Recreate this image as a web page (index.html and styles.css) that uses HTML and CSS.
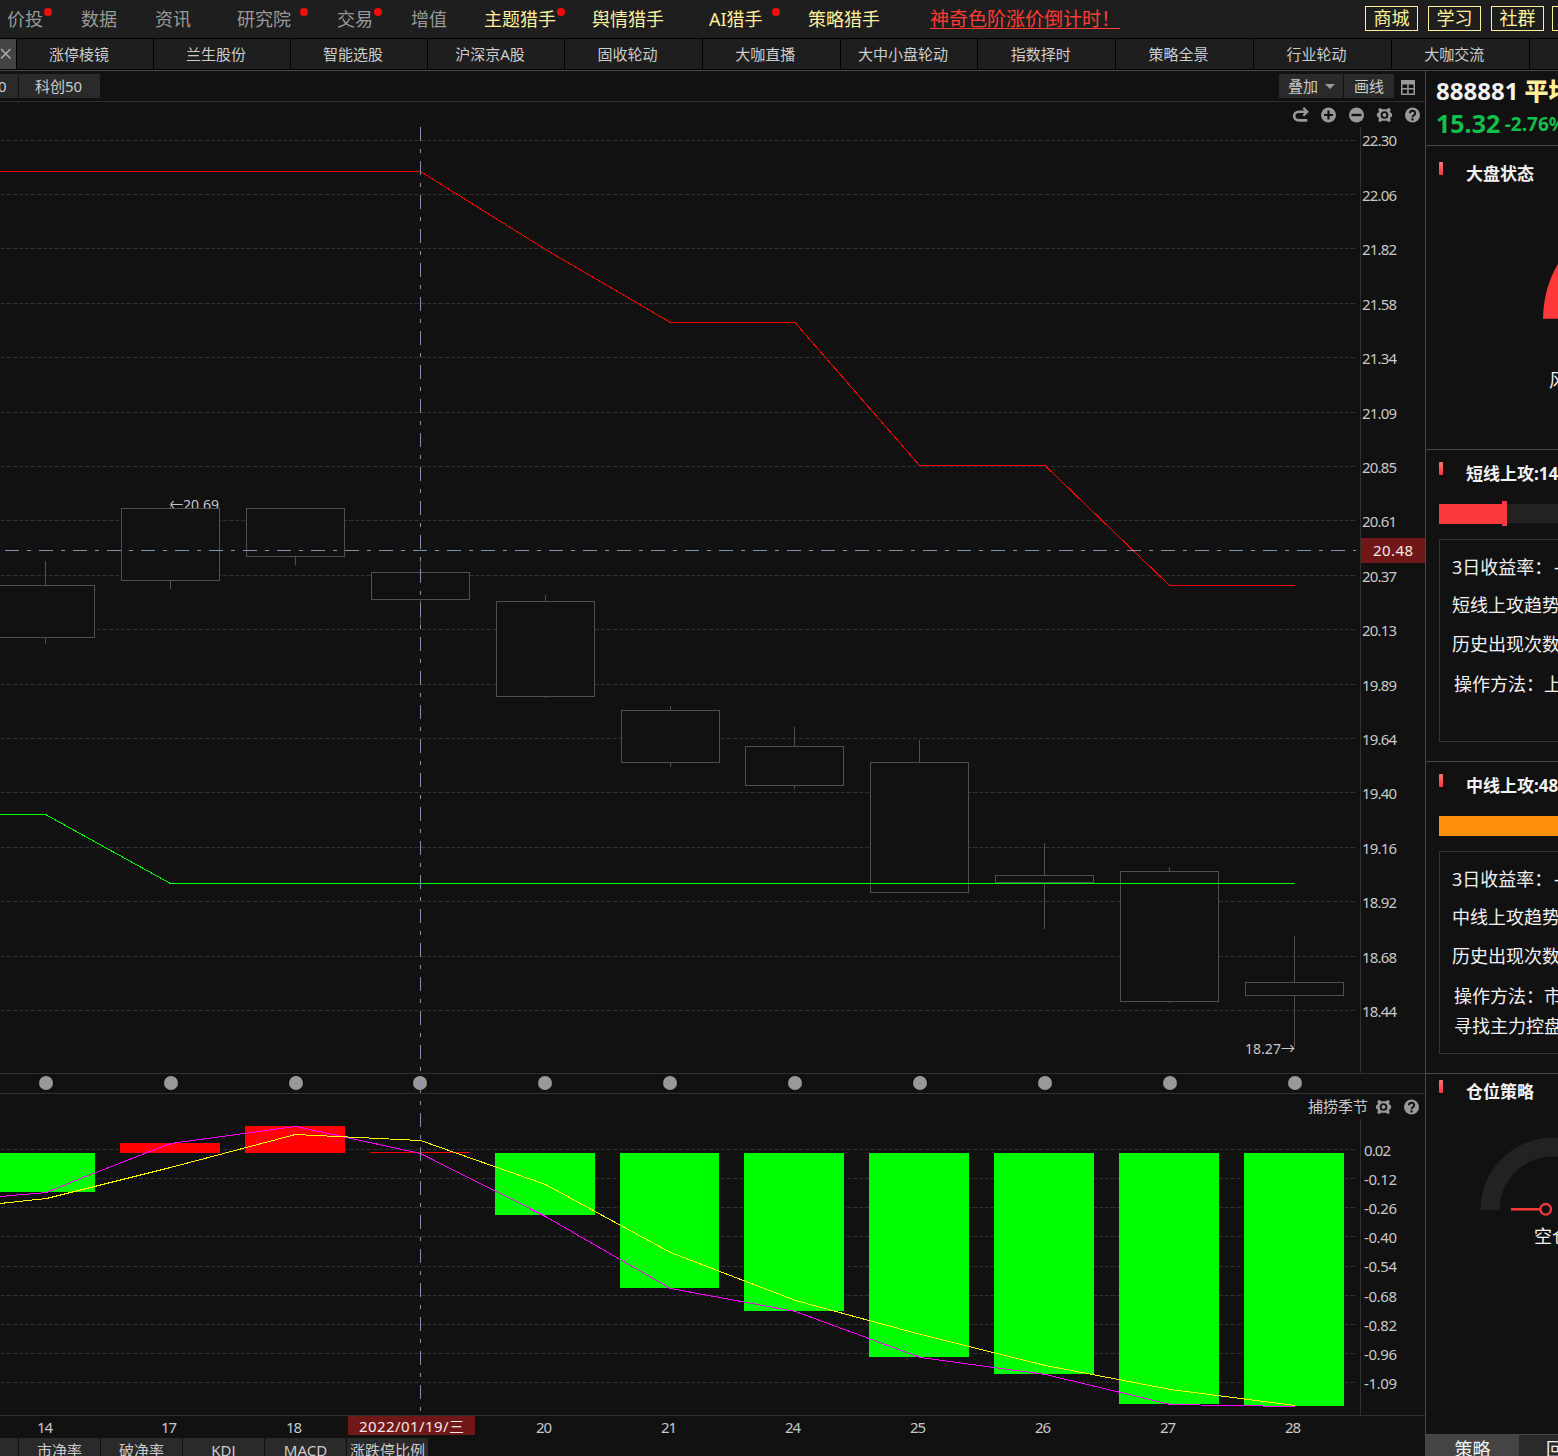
FILE: index.html
```html
<!DOCTYPE html>
<html lang="zh-CN">
<head>
<meta charset="utf-8">
<title>行情</title>
<link rel="stylesheet" href="styles.css">
</head>
<body>
<div class="app">
  <header class="nav">
    <nav class="menu">
      <a class="dot">价投</a><a>数据</a><a>资讯</a><a class="dot far">研究院</a><a class="dot">交易</a><a>增值</a>
      <a class="hunter dot">主题猎手</a><a class="hunter">舆情猎手</a><a class="hunter dot far">AI猎手</a><a class="hunter">策略猎手</a>
      <a class="promo">神奇色阶涨价倒计时！</a>
    </nav>
    <div class="links"><a>商城</a><a>学习</a><a>社群</a><a></a></div>
  </header>
  <nav class="tabs">
    <span class="close"><svg width="12" height="12" viewBox="0 0 12 12"><path d="M1 1L10.5 10.5M10.5 1L1 10.5" stroke="#aaa" stroke-width="1.6"/></svg></span>
    <a>涨停棱镜</a><a>兰生股份</a><a>智能选股</a><a>沪深京A股</a><a>固收轮动</a><a>大咖直播</a><a>大中小盘轮动</a><a>指数择时</a><a>策略全景</a><a>行业轮动</a><a>大咖交流</a><a></a>
  </nav>
  <div class="body">
    <main class="main">
      <div class="toolbar">
        <span class="chip cut">0</span><span class="chip index">科创50</span>
        <span class="spring"></span>
        <span class="chip overlay">叠加<i class="caret"></i></span><span class="chip draw">画线</span>
        <svg class="grid-icon" width="14" height="15" viewBox="0 0 14 15"><path d="M0 0H14V15H0ZM1.5 4.5V8H6.2V4.5ZM7.7 4.5V8H12.5V4.5ZM1.5 9.5V13.5H6.2V9.5ZM7.7 9.5V13.5H12.5V9.5Z" fill="#999" fill-rule="evenodd"/></svg>
      </div>
      <svg class="chart" width="1425" height="1336" viewBox="0 102 1425 1336">
        <defs>
          <g id="gear"><path d="M-4.6-7.3L-2.4-5.7H2.4L4.6-7.3L6.2-5.6L5.4-3L7.6-1.3V1.3L5.4 3L6.2 5.6L4.6 7.3L2.4 5.7H-2.4L-4.6 7.3L-6.2 5.6L-5.4 3L-7.6 1.3V-1.3L-5.4-3L-6.2-5.6Z" fill="#999"/><circle r="2.9" fill="none" stroke="#111" stroke-width="1.9"/></g>
          <g id="help"><circle r="7.5" fill="#999"/><path d="M-2.6-1.7C-2.6-5.2 2.7-5.2 2.7-1.8C2.7.2 0 .2 0 2.2" fill="none" stroke="#111" stroke-width="2"/><rect x="-1.1" y="3.3" width="2.2" height="2.2" fill="#111"/></g>
          <circle id="day" r="7" fill="#999"/>
        </defs>

        <!-- grid and frame -->
        <path class="grid" d="M1 140.5H1355M1 194.5H1355M1 248.5H1355M1 303.5H1355M1 357.5H1355M1 412.5H1355M1 466.5H1355M1 520.5H1355M1 575.5H1355M1 629.5H1355M1 684.5H1355M1 738.5H1355M1 792.5H1355M1 847.5H1355M1 901.5H1355M1 956.5H1355M1 1010.5H1355"/>
        <path class="grid" d="M1 1149.5H1355M1 1178.5H1355M1 1207.5H1355M1 1236.5H1355M1 1266.5H1355M1 1295.5H1355M1 1324.5H1355M1 1353.5H1355M1 1382.5H1355"/>
        <path class="frame" d="M1360.5 127V1073M1360.5 1119V1415M0 1073.5H1425M0 1093.5H1425M0 1415.5H1425"/>

        <!-- chart tools -->
        <g transform="translate(1300.5 115)" fill="none" stroke="#999"><path d="M6.8 5.4H-1.5C-8 5.4-8-3.2-1.5-3.2H5.5" stroke-width="2.6"/><path d="M2.8-7.2L6.8-3.2L2.8.8" stroke-width="2.2"/></g>
        <g transform="translate(1328.5 115)"><circle r="7.5" fill="#999"/><path d="M-4.5 0H4.5M0-4.5V4.5" stroke="#111" stroke-width="2.2"/></g>
        <g transform="translate(1356.5 115)"><circle r="7.5" fill="#999"/><path d="M-5 0H5" stroke="#111" stroke-width="2.4"/></g>
        <use href="#gear" x="1384.5" y="115"/><use href="#help" x="1412.5" y="115"/>
        <use href="#gear" x="1383.5" y="1107"/><use href="#help" x="1411.5" y="1107"/>
        <text class="label" x="1308" y="1112">捕捞季节</text>

        <!-- candles -->
        <text class="label" x="169" y="510" textLength="50" lengthAdjust="spacingAndGlyphs">←20.69</text>
        <g class="candle">
          <path d="M45.5 561V644M170.5 504V589M295.5 508V565M420.5 560V626M545.5 595V698M670.5 706V767M794.5 727V789M919.5 740V892M1044.5 843V929M1169.5 867V1003M1294.5 936V1047"/>
          <rect x="-4.5" y="585.5" width="99" height="52"/>
          <rect x="121.5" y="508.5" width="98" height="72"/>
          <rect x="246.5" y="508.5" width="98" height="48"/>
          <rect x="371.5" y="572.5" width="98" height="27"/>
          <rect x="496.5" y="601.5" width="98" height="95"/>
          <rect x="621.5" y="710.5" width="98" height="52"/>
          <rect x="745.5" y="746.5" width="98" height="39"/>
          <rect x="870.5" y="762.5" width="98" height="130"/>
          <rect x="995.5" y="875.5" width="98" height="7"/>
          <rect x="1120.5" y="871.5" width="98" height="130"/>
          <rect x="1245.5" y="982.5" width="98" height="13"/>
        </g>
        <text class="label" x="1245" y="1054" textLength="50" lengthAdjust="spacingAndGlyphs">18.27→</text>
        <polyline class="line" stroke="#f00" points="0,171.5 420.5,171.5 545.5,249.5 670.5,322.5 795,322.5 919.5,465.5 1045,465.5 1169.5,585.5 1295,585.5"/>
        <polyline class="line" stroke="#0f0" points="0,814.5 45.5,814.5 170.5,883.5 1295,883.5"/>

        <!-- trading days -->
        <use href="#day" x="46" y="1083"/><use href="#day" x="171" y="1083"/><use href="#day" x="296" y="1083"/><use href="#day" x="420" y="1083"/><use href="#day" x="545" y="1083"/><use href="#day" x="670" y="1083"/><use href="#day" x="795" y="1083"/><use href="#day" x="920" y="1083"/><use href="#day" x="1045" y="1083"/><use href="#day" x="1170" y="1083"/><use href="#day" x="1295" y="1083"/>

        <!-- indicator -->
        <path fill="#f00" d="M120 1143H220V1153H120ZM245 1126H345V1153H245ZM370 1152H470V1153H370Z"/>
        <path fill="#0f0" d="M0 1153H95V1192H0ZM495 1153H595V1215H495ZM620 1153H719V1288H620ZM744 1153H844V1311H744ZM869 1153H969V1357H869ZM994 1153H1094V1374H994ZM1119 1153H1219V1404H1119ZM1244 1153H1344V1406H1244Z"/>
        <polyline class="line" stroke="#f0f" points="0,1196.5 46.5,1192.5 80.5,1178.5 170.5,1143.5 295.5,1126.5 420.5,1153.5 545.5,1216.5 670.5,1288.5 795.5,1311.5 920.5,1357.5 1045.5,1374.5 1170.5,1404.5 1230,1405.5 1295,1406.5"/>
        <polyline class="line" stroke="#ff0" points="0,1203.5 46.5,1198.5 170.5,1167.5 295.5,1134.5 420.5,1140.5 545.5,1184.5 670.5,1252.5 795.5,1300.5 920.5,1334.5 1045.5,1365.5 1170.5,1389.5 1295,1405.5"/>

        <!-- crosshair -->
        <path class="cross" d="M5 550.5H1356M420.5 127V1411"/>

        <!-- price scale -->
        <g class="scale">
          <text x="1362" y="146" textLength="35">22.30</text><text x="1362" y="201" textLength="35">22.06</text><text x="1362" y="255" textLength="35">21.82</text><text x="1362" y="310" textLength="35">21.58</text><text x="1362" y="364" textLength="35">21.34</text><text x="1362" y="419" textLength="35">21.09</text><text x="1362" y="473" textLength="35">20.85</text><text x="1362" y="527" textLength="35">20.61</text><text x="1362" y="582" textLength="35">20.37</text><text x="1362" y="636" textLength="35">20.13</text><text x="1362" y="691" textLength="35">19.89</text><text x="1362" y="745" textLength="35">19.64</text><text x="1362" y="799" textLength="35">19.40</text><text x="1362" y="854" textLength="35">19.16</text><text x="1362" y="908" textLength="35">18.92</text><text x="1362" y="963" textLength="35">18.68</text><text x="1362" y="1017" textLength="35">18.44</text>
        </g>
        <g class="scale">
          <text x="1364" y="1156" textLength="27">0.02</text><text x="1364" y="1185" textLength="33">-0.12</text><text x="1364" y="1214" textLength="33">-0.26</text><text x="1364" y="1243" textLength="33">-0.40</text><text x="1364" y="1272" textLength="33">-0.54</text><text x="1364" y="1302" textLength="33">-0.68</text><text x="1364" y="1331" textLength="33">-0.82</text><text x="1364" y="1360" textLength="33">-0.96</text><text x="1364" y="1389" textLength="33">-1.09</text>
        </g>
        <rect x="1361" y="538" width="64" height="25" fill="#701818"/>
        <text class="mark" x="1373" y="556" textLength="40">20.48</text>

        <!-- dates -->
        <g class="scale">
          <text x="37" y="1433" textLength="16">14</text><text x="161" y="1433" textLength="16">17</text><text x="286" y="1433" textLength="16">18</text><text x="536" y="1433" textLength="16">20</text><text x="661" y="1433" textLength="16">21</text><text x="785" y="1433" textLength="16">24</text><text x="910" y="1433" textLength="16">25</text><text x="1035" y="1433" textLength="16">26</text><text x="1160" y="1433" textLength="16">27</text><text x="1285" y="1433" textLength="16">28</text>
        </g>
        <rect x="348" y="1416" width="127" height="19" fill="#701818"/>
        <text class="mark" x="359" y="1432" textLength="105">2022/01/19/三</text>
      </svg>
      <div class="indicators"><span class="cut"></span><span>市净率</span><span>破净率</span><span>KDJ</span><span>MACD</span><span>涨跌停比例</span></div>
    </main>

    <aside class="side">
      <div class="quote">
        <div class="name">888881 <b>平均</b></div>
        <div class="price">15.32 <small>-2.76%</small></div>
      </div>
      <section class="card state">
        <h3>大盘状态</h3>
        <svg class="gauge" width="132" height="70" viewBox="1426 250 132 70"><path d="M1543 318.7A108 108 0 0 1 1759 318.7H1719A68 68 0 0 0 1583 318.7Z" fill="#ff3939"/></svg>
        <p class="risk">风</p>
      </section>
      <section class="card">
        <h3>短线上攻:14</h3>
        <div class="meter"><i class="fill short"></i></div>
        <div class="box"><p>3日收益率： -</p><p>短线上攻趋势</p><p>历史出现次数</p><p class="tip">操作方法：上</p></div>
      </section>
      <section class="card">
        <h3>中线上攻:48</h3>
        <div class="meter"><i class="fill mid"></i></div>
        <div class="box"><p>3日收益率： -</p><p>中线上攻趋势</p><p>历史出现次数</p><p class="tip">操作方法：市<br>寻找主力控盘</p></div>
      </section>
      <section class="card position">
        <h3>仓位策略</h3>
        <svg class="gauge" width="132" height="90" viewBox="1426 1130 132 90"><path d="M1480.5 1210A72.5 72.5 0 0 1 1625.5 1210H1606.5A53.5 53.5 0 0 0 1499.5 1210Z" fill="#222"/><path d="M1511 1209.3H1541" stroke="#f03838" stroke-width="2.6"/><circle cx="1545.7" cy="1209.3" r="5.3" fill="#111" stroke="#f03838" stroke-width="2.3"/></svg>
        <p class="empty">空仓</p>
      </section>
      <div class="side-tabs"><span class="on">策略</span><span>回</span></div>
    </aside>
  </div>
</div>
</body>
</html>
```

FILE: styles.css
```css
* { box-sizing: border-box; }
body { margin: 0; background: #111; overflow: hidden; color: #ccc; font-family: "Noto Sans", "Noto Sans CJK SC", sans-serif; font-size: 15px; }
h3, p { margin: 0; font-weight: 400; }
.app { width: 1558px; height: 1456px; overflow: hidden; display: flex; flex-direction: column; white-space: nowrap; }

.nav { height: 39px; background: #1e1e1e; border-bottom: 1px solid #000; display: flex; flex: none; justify-content: space-between; overflow: hidden; }
.menu { display: grid; grid-template-columns: 74px 74px 82px 100px 74px 73px 108px 117px 99px 122px 200px; padding-left: 7px; line-height: 39px; font-size: 18px; color: #999; }
.menu a { position: relative; justify-self: start; height: 38px; }
.menu .hunter { color: #fff09a; }
.menu .dot::after { content: ""; position: absolute; right: -9px; top: 8px; width: 8px; height: 8px; border-radius: 50%; background: #f00d0d; }
.menu .far::after { right: -17px; }
.menu .promo { font-size: 19px; color: #ff3c33; text-decoration: underline; text-underline-offset: 2px; text-decoration-thickness: 1px; }
.links { display: flex; gap: 10px; width: 193px; flex: none; padding-top: 6px; overflow: hidden; }
.links a { flex: none; width: 53px; height: 25px; border: 1px solid #fff09a; color: #fff09a; font-size: 18px; line-height: 23px; text-align: center; }
.links a:last-child { margin-left: -2px; }

.tabs { height: 32px; flex: none; display: flex; background: #1e1e1e; border-bottom: 1px solid #484848; box-shadow: inset 0 -1px #000; }
.tabs a { width: 137.8px; flex: none; border-left: 1px solid #000; padding-right: 12px; line-height: 31px; text-align: center; }
.tabs a:nth-child(-n+5) { width: 137px; }
.close { width: 16px; flex: none; background: #444; height: 30px; padding-top: 9px; line-height: 0; }

.body { display: flex; flex: 1; min-height: 0; }
.main { width: 1425px; flex: none; display: flex; flex-direction: column; }
.toolbar { height: 31px; flex: none; border-bottom: 1px solid #2e2e2e; display: flex; align-items: flex-start; padding-top: 3px; gap: 1px; }
.chip { height: 24px; background: #2a2a2a; line-height: 24px; width: 81px; text-align: center; }
.toolbar .cut { width: 18px; text-align: left; text-indent: -2px; }
.toolbar .index { padding-right: 2px; }
.spring { flex: 1; }
.toolbar .overlay { width: 64px; display: flex; align-items: center; gap: 7px; padding-left: 9px; line-height: 22px; }
.caret { border: 5px solid transparent; border-top-color: #999; border-bottom: 0; }
.toolbar .draw { width: 50px; }
.grid-icon { margin: 6px 10px 0 6px; }
.chart { display: block; flex: none; }
.chart text { font-size: 15px; fill: #c8c8c8; }
.chart .mark { fill: #f4e8e8; }
.grid, .frame, .candle, .line, .cross { fill: none; shape-rendering: crispEdges; }
.grid { stroke: #303030; stroke-dasharray: 4 2; }
.frame { stroke: #303030; }
.candle { stroke: #505050; }
.candle rect { fill: #111; }
.cross { stroke: #8094ad; stroke-dasharray: 14 8 4 8; }
.indicators { display: flex; gap: 1px; height: 18px; overflow: hidden; }
.indicators span { width: 81px; background: #2a2a2a; text-align: center; line-height: 24px; flex: none; }
.indicators .cut { width: 18px; }

.side { width: 133px; flex: none; border-left: 1px solid #484848; color: #f2f2f2; overflow: hidden; display: flex; flex-direction: column; }
.quote { height: 75px; flex: none; border-bottom: 1px solid #484848; padding: 4px 0 0 10px; font-weight: 700; }
.name { font-size: 24px; line-height: 32px; }
.name b { color: #ffef96; }
.price { font-size: 25px; line-height: 33px; color: #12bf4b; }
.price small { font-size: 19px; margin-left: -2px; vertical-align: 2px; }
.card { height: 312px; flex: none; border-bottom: 1px solid #484848; padding: 12px 0 0 13px; overflow: hidden; }
.card h3 { position: relative; font-size: 17px; font-weight: 700; line-height: 23px; height: 42px; padding-left: 27px; }
.card h3::before { content: ""; position: absolute; left: 0; top: 0; width: 4px; height: 13px; border-radius: 1px; background: linear-gradient(#ff7474, #ff3636); }
.state { height: 304px; padding-top: 16px; }
.gauge { display: block; margin: 46px 0 0 -13px; }
.risk { font-size: 18px; line-height: 24px; padding: 48px 0 0 110px; }
.meter { height: 19px; background: #222; margin-bottom: 16px; }
.fill { display: block; height: 20px; }
.fill.short { width: 68px; background: #fb3b3b; position: relative; }
.fill.short::after { content: ""; position: absolute; right: 0; top: -3px; width: 5px; height: 25px; background: inherit; }
.fill.mid { background: #ff8f0b; }
.box { width: 260px; height: 203px; border: 1px solid #333; padding: 8px 0 0 12px; font-size: 18px; line-height: 38.3px; }
.box p:first-child { word-spacing: -3px; }
.box .tip { padding: 6px 0 0 2px; line-height: 30px; }
.position { height: 361px; padding-top: 6px; }
.position .gauge { margin-top: 8px; }
.empty { font-size: 18px; line-height: 24px; padding: 4px 0 0 95px; }
.side-tabs { display: flex; flex: 1; background: #2a2a2a; font-size: 18px; line-height: 29px; overflow: hidden; }
.side-tabs span { width: 93px; flex: none; text-align: center; }
.side-tabs .on { background: #444; }
.side-tabs span + span { text-align: left; padding-left: 27px; }
```
